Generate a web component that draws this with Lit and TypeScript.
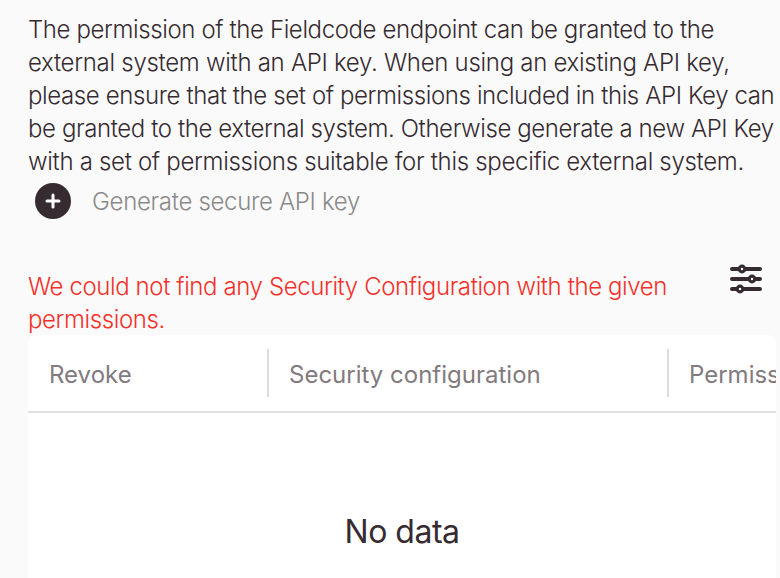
import { LitElement, html, css } from "lit";
import { customElement } from "lit/decorators.js";

@customElement("app-root")
export class AppRoot extends LitElement {
  static styles = css`
    :host { display: block; width: 780px; height: 578px; overflow: hidden; background: #fafafa; font-family: Inter, "Liberation Sans", sans-serif; font-weight: 300; font-size: 24px; line-height: 33px; color: #352b31; }
    .page { padding: 13px 4px 0 28px; display: flex; flex-direction: column; }
    .intro { margin: 0; white-space: nowrap; letter-spacing: -0.39px; }
    .line { display: block; }
    .wide { letter-spacing: -0.29px; }
    .mid { letter-spacing: -0.31px; }
    .narrow { letter-spacing: -0.4px; }
    .gen { display: flex; align-items: center; gap: 21px; padding-left: 7px; height: 36px; margin-top: 5px; color: #8a8a8a; letter-spacing: -0.31px; }
    .plus { width: 36px; height: 36px; flex: none; }
    .warn { display: flex; justify-content: space-between; align-items: flex-start; margin-top: 51px; height: 65px; }
    .msg { margin: 0; color: #f5302a; width: 680px; letter-spacing: -0.4px; }
    .cfg { width: 34px; height: 34px; flex: none; margin: -6px 13px 0 0; }
    .table { background: #fff; border-radius: 8px 8px 0 0; height: 243px; overflow: hidden; }
    .head { display: flex; height: 78px; border-bottom: 2px solid #e0e0e0; align-items: center; box-sizing: border-box; color: #827a7e; font-weight: 400; letter-spacing: 0; white-space: nowrap; overflow: hidden; }
    .cell { height: 48px; display: flex; align-items: center; padding: 3px 0 0 21px; box-sizing: border-box; flex: none; }
    .cell + .cell { border-left: 2px solid #dcdcdc; padding-left: 20px; }
    .c1 { width: 239px; } .c2 { width: 400px; } .c3 { width: 120px; }
    .empty { display: flex; justify-content: center; padding-top: 99px; font-size: 32px; line-height: 40px; font-weight: 400; letter-spacing: -0.5px; }
  `;
  render() {
    return html`<div class="page">
      <p class="intro">
        <span class="line">The permission of the Fieldcode endpoint can be granted to the</span>
        <span class="line wide">external system with an API key. When using an existing API key,</span>
        <span class="line">please ensure that the set of permissions included in this API Key can</span>
        <span class="line narrow">be granted to the external system. Otherwise generate a new API Key</span>
        <span class="line mid">with a set of permissions suitable for this specific external system.</span>
      </p>
      <div class="gen">
        <svg class="plus" viewBox="0 0 36 36"><circle cx="18" cy="18" r="18" fill="#352b31"/><path d="M18 12v12M12 18h12" stroke="#fff" stroke-width="3" stroke-linecap="round"/></svg>
        <span>Generate secure API key</span>
      </div>
      <div class="warn">
        <p class="msg">We could not find any Security Configuration with the given permissions.</p>
        <svg class="cfg" viewBox="0 0 34 34" fill="none" stroke-linecap="round"><path d="M3 5h28M3 15h28M3 25h28" stroke="#352b31" stroke-width="4"/><g fill="#fff" stroke="#352b31" stroke-width="3.200"><circle cx="13" cy="5" r="2.800"/><circle cx="23" cy="15" r="2.800"/><circle cx="11" cy="25" r="2.800"/></g></svg>
      </div>
      <div class="table">
        <div class="head"><div class="cell c1">Revoke</div><div class="cell c2">Security configuration</div><div class="cell c3">Permissions</div></div>
        <div class="empty">No data</div>
      </div>
    </div>`;
  }
}
